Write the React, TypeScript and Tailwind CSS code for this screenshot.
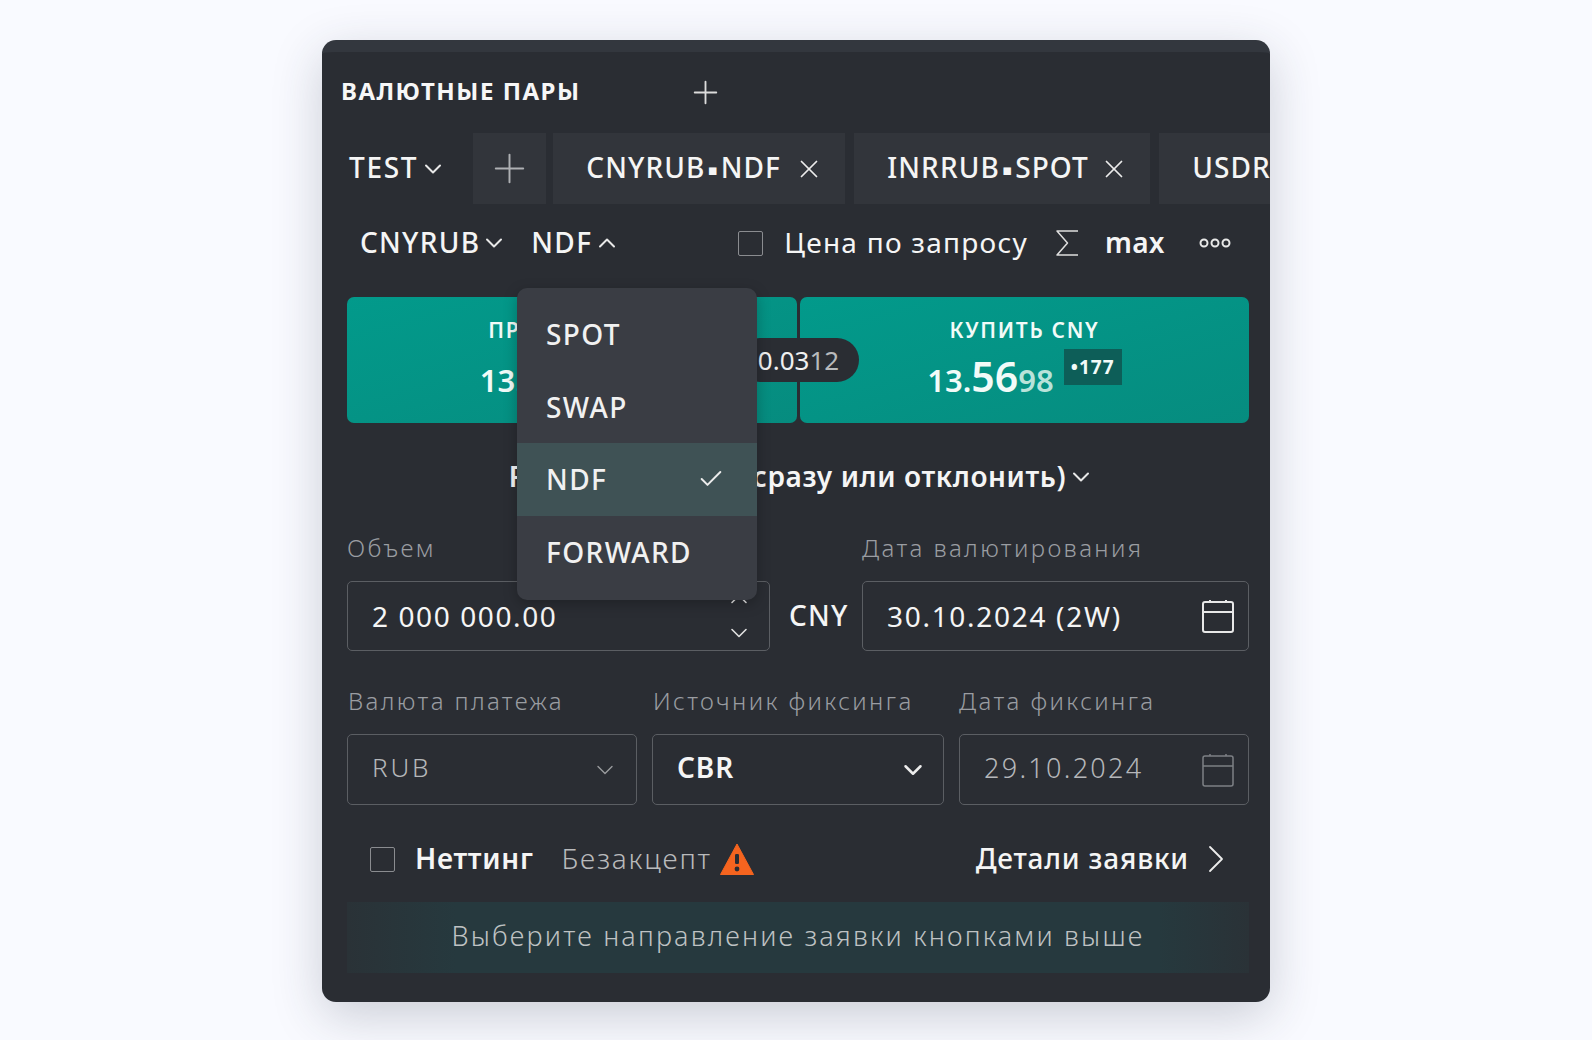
import React from "react";
import { ChevronDown, ChevronUp, Plus, X, Check } from "lucide-react";

const font = { fontFamily: '"Noto Sans", "DejaVu Sans", sans-serif' };

function CalendarIcon({ dim }: { dim?: boolean }) {
  const c = dim ? "#7d8085" : "#e8e8e8";
  return (
    <svg className="shrink-0" width="32" height="34" viewBox="0 0 32 34" fill="none" stroke={c} strokeWidth={dim ? 1.5 : 2}>
      <rect x="1" y="3" width="30" height="30" rx="2" />
      <path d="M1 13H31" />
      <path d="M8 1V3M24 1V3" />
    </svg>
  );
}

function Dot() {
  return <span className="mx-[2px] text-[15px] leading-none align-[3px]">▪</span>;
}

function Tab({ a, b, w, xGap, closable = true }: { a: string; b: string; w: string; xGap?: string; closable?: boolean }) {
  return (
    <div className={`flex h-[71px] shrink-0 items-center bg-[#32353b] ${w}`}>
      <span className="ml-[33px] whitespace-nowrap pb-[3px] text-[28px] font-medium leading-none tracking-[1.1px] text-[#f5f5f5]">
        {a}
        <Dot />
        {b}
      </span>
      {closable && <X className={`shrink-0 text-[#ececec] ${xGap}`} size={30} strokeWidth={1.4} />}
    </div>
  );
}

function Label({ children, className = "" }: { children: React.ReactNode; className?: string }) {
  return <div className={`h-[34px] whitespace-nowrap text-[24px] font-light leading-[34px] tracking-[2.4px] text-[#9a9da2] ${className}`}>{children}</div>;
}

function Price({ a, b, c }: { a: string; b: string; c: string }) {
  return (
    <span className="flex items-baseline font-semibold leading-none text-[#f2fbf8]">
      <span className="text-[31px]">{a}</span>
      <span className="text-[41px]">{b}</span>
      <span className="text-[31px] text-[#b9e3da]">{c}</span>
    </span>
  );
}

export default function App() {
  return (
    <div style={font} className="h-[1040px] overflow-hidden bg-[#f9faff] pl-[322px] pt-[40px]">
      <div className="relative h-[962px] w-[948px] overflow-hidden rounded-[14px] border-t-[12px] border-[#33373e] bg-[#2a2d33] shadow-[0_14px_50px_rgba(40,50,70,0.22)]">
        <div className="flex h-[81px] items-center pl-[19px]">
          <span className="w-[346px] whitespace-nowrap pb-[3px] text-[24px] font-bold leading-none tracking-[1.5px] text-[#f7f7f7]">ВАЛЮТНЫЕ ПАРЫ</span>
          <Plus size={37} strokeWidth={1.2} className="text-[#dcdcdc]" />
        </div>

        <div className="flex h-[71px] items-center overflow-hidden pl-[27px]">
          <span className="pb-[3px] text-[28px] font-medium leading-none tracking-[1.7px] text-[#f5f5f5]">TEST</span>
          <ChevronDown size={28} strokeWidth={1.7} className="ml-[1px] shrink-0 text-[#e8e8e8]" />
          <div className="ml-[26px] flex h-[71px] w-[73px] shrink-0 items-center justify-center bg-[#32353b]">
            <Plus size={47} strokeWidth={1} className="text-[#aeb0b3]" />
          </div>
          <div className="ml-[7px] flex shrink-0 gap-[9px]">
            <Tab a="CNYRUB" b="NDF" w="w-[292px]" xGap="ml-[13px]" />
            <Tab a="INRRUB" b="SPOT" w="w-[296px]" xGap="ml-[10px]" />
            <Tab a="USDRUB" b="SPOT" w="w-[296px]" closable={false} />
          </div>
        </div>

        <div className="flex h-[78px] items-center text-[28px] leading-none text-[#f5f5f5]">
          <span className="ml-[38px] pb-[3px] font-medium tracking-[1.3px]">CNYRUB</span>
          <ChevronDown size={28} strokeWidth={1.7} className="shrink-0 text-[#e8e8e8]" />
          <span className="ml-[23px] pb-[3px] font-medium tracking-[1.3px]">NDF</span>
          <ChevronUp size={28} strokeWidth={1.7} className="ml-[1px] shrink-0 text-[#e8e8e8]" />
          <span className="ml-[117px] h-[25px] w-[25px] shrink-0 rounded-[2px] border border-[#8a8c90]" />
          <span className="ml-[21px] whitespace-nowrap pb-[3px] tracking-[1.25px]">Цена по запросу</span>
          <svg className="ml-[27px] shrink-0" width="24" height="28" viewBox="0 0 24 28" fill="none" stroke="#dedede" strokeWidth="1.5">
            <path d="M23 2H2L12.5 14L2 26H23" strokeLinejoin="round" />
          </svg>
          <span className="ml-[26px] pb-[3px] font-semibold tracking-[0.3px]">max</span>
          <svg className="ml-[34px] shrink-0" width="32" height="12" viewBox="0 0 32 12" fill="none" stroke="#e8e8e8" strokeWidth="2">
            <circle cx="5" cy="6" r="3.5" />
            <circle cx="16" cy="6" r="3.5" />
            <circle cx="27" cy="6" r="3.5" />
          </svg>
        </div>

        <div className="relative ml-[25px] mt-[15px] flex h-[126px] w-[902px] gap-[3px]">
          <div className="flex w-[450px] flex-col items-center rounded-[7px] bg-gradient-to-br from-[#029a8b] to-[#068c7f] pt-[19px]">
            <span className="pr-[2px] text-[21px] font-semibold leading-[28px] tracking-[1.7px] text-[#f2fbf8]">ПРОДАТЬ CNY</span>
            <span className="flex items-start gap-[10px] pl-[10px]">
              <span className="mt-[12px]"><Price a="13." b="53" c="86" /></span>
              <span className="mt-[5px] flex h-[36px] w-[58px] items-center justify-center bg-[#0d5e58] text-[19px] font-bold tracking-[1px] text-[#f2fbf8]">•177</span>
            </span>
          </div>
          <div className="flex w-[449px] flex-col items-center rounded-[7px] bg-gradient-to-br from-[#029a8b] to-[#068c7f] pt-[19px]">
            <span className="text-[21px] font-semibold leading-[28px] tracking-[1.7px] text-[#f2fbf8]">КУПИТЬ CNY</span>
            <span className="flex items-start gap-[10px]">
              <span className="mt-[12px]"><Price a="13." b="56" c="98" /></span>
              <span className="mt-[5px] flex h-[36px] w-[58px] items-center justify-center bg-[#0d5e58] text-[19px] font-bold tracking-[1px] text-[#f2fbf8]">•177</span>
            </span>
          </div>
          <div className="absolute left-[391px] top-[41px] flex h-[44px] w-[121px] items-center justify-center rounded-full bg-[#2a2d33] text-[26px] leading-none text-[#f0f0f0]">
            0.03<span className="text-[#b8babc]">12</span>
          </div>
        </div>

        <div className="flex h-[108px] items-center justify-center pl-[12px] text-[28px] font-semibold leading-none tracking-[0.6px] text-[#f5f5f5]">
          <span className="whitespace-nowrap pb-[3px]">Рыночная цена (сразу или отклонить)</span>
          <ChevronDown size={28} strokeWidth={1.7} className="ml-[1px] shrink-0 text-[#e8e8e8]" />
        </div>

        <div className="flex h-[120px] flex-col pl-[25px] pr-[21px]">
          <div className="flex">
            <Label className="w-[515px]">Объем</Label>
            <Label>Дата валютирования</Label>
          </div>
          <div className="mt-[16px] flex h-[70px] items-center">
            <div className="flex h-[70px] w-[423px] shrink-0 items-center justify-between rounded-[5px] border border-[#5b5e63] pl-[24px] pr-[16px]">
              <span className="pb-[1px] text-[28px] font-normal leading-none tracking-[1.6px] text-[#f5f5f5]">2 000 000.00</span>
              <span className="flex h-[62px] flex-col items-center justify-between">
                <ChevronUp size={28} strokeWidth={1.4} className="text-[#e0e0e0]" />
                <ChevronDown size={28} strokeWidth={1.4} className="text-[#e0e0e0]" />
              </span>
            </div>
            <span className="ml-[19px] w-[73px] shrink-0 pb-[3px] text-[28px] font-medium leading-none tracking-[1.3px] text-[#f5f5f5]">CNY</span>
            <div className="flex h-[70px] w-[387px] shrink-0 items-center justify-between rounded-[5px] border border-[#5b5e63] pl-[24px] pr-[14px]">
              <span className="pb-[1px] text-[28px] leading-none tracking-[1.7px] text-[#f5f5f5]">30.10.2024 (2W)</span>
              <CalendarIcon />
            </div>
          </div>
        </div>

        <div className="mt-[33px] grid grid-cols-[290px_292px_290px] gap-x-[15px] pl-[25px] pr-[20px]">
          <Label className="pl-[1px]">Валюта платежа</Label>
          <Label className="pl-[1px]">Источник фиксинга</Label>
          <Label>Дата фиксинга</Label>
          <div className="mt-[16px] flex h-[71px] items-center justify-between rounded-[5px] border border-[#5b5e63] pl-[24px] pr-[17px]">
            <span className="pb-[5px] text-[26px] font-light leading-none tracking-[2.8px] text-[#b5b7ba]">RUB</span>
            <ChevronDown size={28} strokeWidth={1.2} className="text-[#9a9c9f]" />
          </div>
          <div className="mt-[16px] flex h-[71px] items-center justify-between rounded-[5px] border border-[#5b5e63] pl-[24px] pr-[15px]">
            <span className="pb-[5px] text-[28px] font-semibold leading-none tracking-[1px] text-[#f5f5f5]">CBR</span>
            <ChevronDown size={30} strokeWidth={2} className="text-[#ececec]" />
          </div>
          <div className="mt-[16px] flex h-[71px] items-center justify-between rounded-[5px] border border-[#5b5e63] pl-[24px] pr-[14px]">
            <span className="pb-[5px] text-[27px] font-light leading-none tracking-[2.3px] text-[#b5b7ba]">29.10.2024</span>
            <CalendarIcon dim />
          </div>
        </div>

        <div className="mt-[19px] flex h-[70px] items-center text-[28px] leading-none">
          <span className="ml-[48px] h-[25px] w-[25px] shrink-0 rounded-[2px] border border-[#8a8c90]" />
          <span className="ml-[20px] pb-[3px] font-semibold tracking-[0.7px] text-[#f5f5f5]">Неттинг</span>
          <span className="ml-[28px] pb-[3px] font-light tracking-[1.8px] text-[#b9babc]">Безакцепт</span>
          <svg className="ml-[8px] shrink-0" width="34" height="32" viewBox="0 0 34 32">
            <path d="M17 1L33.5 31.5H0.5Z" fill="#f5641f" stroke="#f5641f" strokeLinejoin="round" />
            <rect x="15" y="11" width="4" height="10" rx="1.2" fill="#2a2d33" />
            <circle cx="17" cy="26" r="2.4" fill="#2a2d33" />
          </svg>
          <span className="ml-auto pb-[3px] font-medium tracking-[0.8px] text-[#f5f5f5]">Детали заявки</span>
          <svg className="ml-[18px] mr-[45px] shrink-0" width="18" height="30" viewBox="0 0 18 30" fill="none" stroke="#ececec" strokeWidth="1.8" strokeLinecap="round" strokeLinejoin="round">
            <path d="M3 3L15 15L3 27" />
          </svg>
        </div>

        <div className="ml-[25px] mt-[8px] flex h-[71px] w-[902px] items-center justify-center bg-[linear-gradient(90deg,#2a3237,#26393e_12%,#26393e_90%,#2a3237)] pb-[2px] text-[27px] font-light tracking-[2.2px] text-[#bfc2c3]">
          Выберите направление заявки кнопками выше
        </div>

        <div className="absolute left-[195px] top-[236px] w-[240px] rounded-[10px] bg-[#3a3d44] pb-[12px] pt-[10px] text-[28px] font-medium leading-none tracking-[1.4px] text-[#f1f1f1] shadow-[0_4px_14px_rgba(0,0,0,0.25)]">
          <div className="flex h-[72.5px] items-center pl-[29px]">SPOT</div>
          <div className="flex h-[72.5px] items-center pl-[29px]">SWAP</div>
          <div className="flex h-[72.5px] items-center justify-between bg-[#3f5255] pl-[29px] pr-[32px]">
            NDF
            <Check size={28} strokeWidth={1.7} className="text-[#ececec]" />
          </div>
          <div className="flex h-[72.5px] items-center pl-[29px]">FORWARD</div>
        </div>
      </div>
    </div>
  );
}
